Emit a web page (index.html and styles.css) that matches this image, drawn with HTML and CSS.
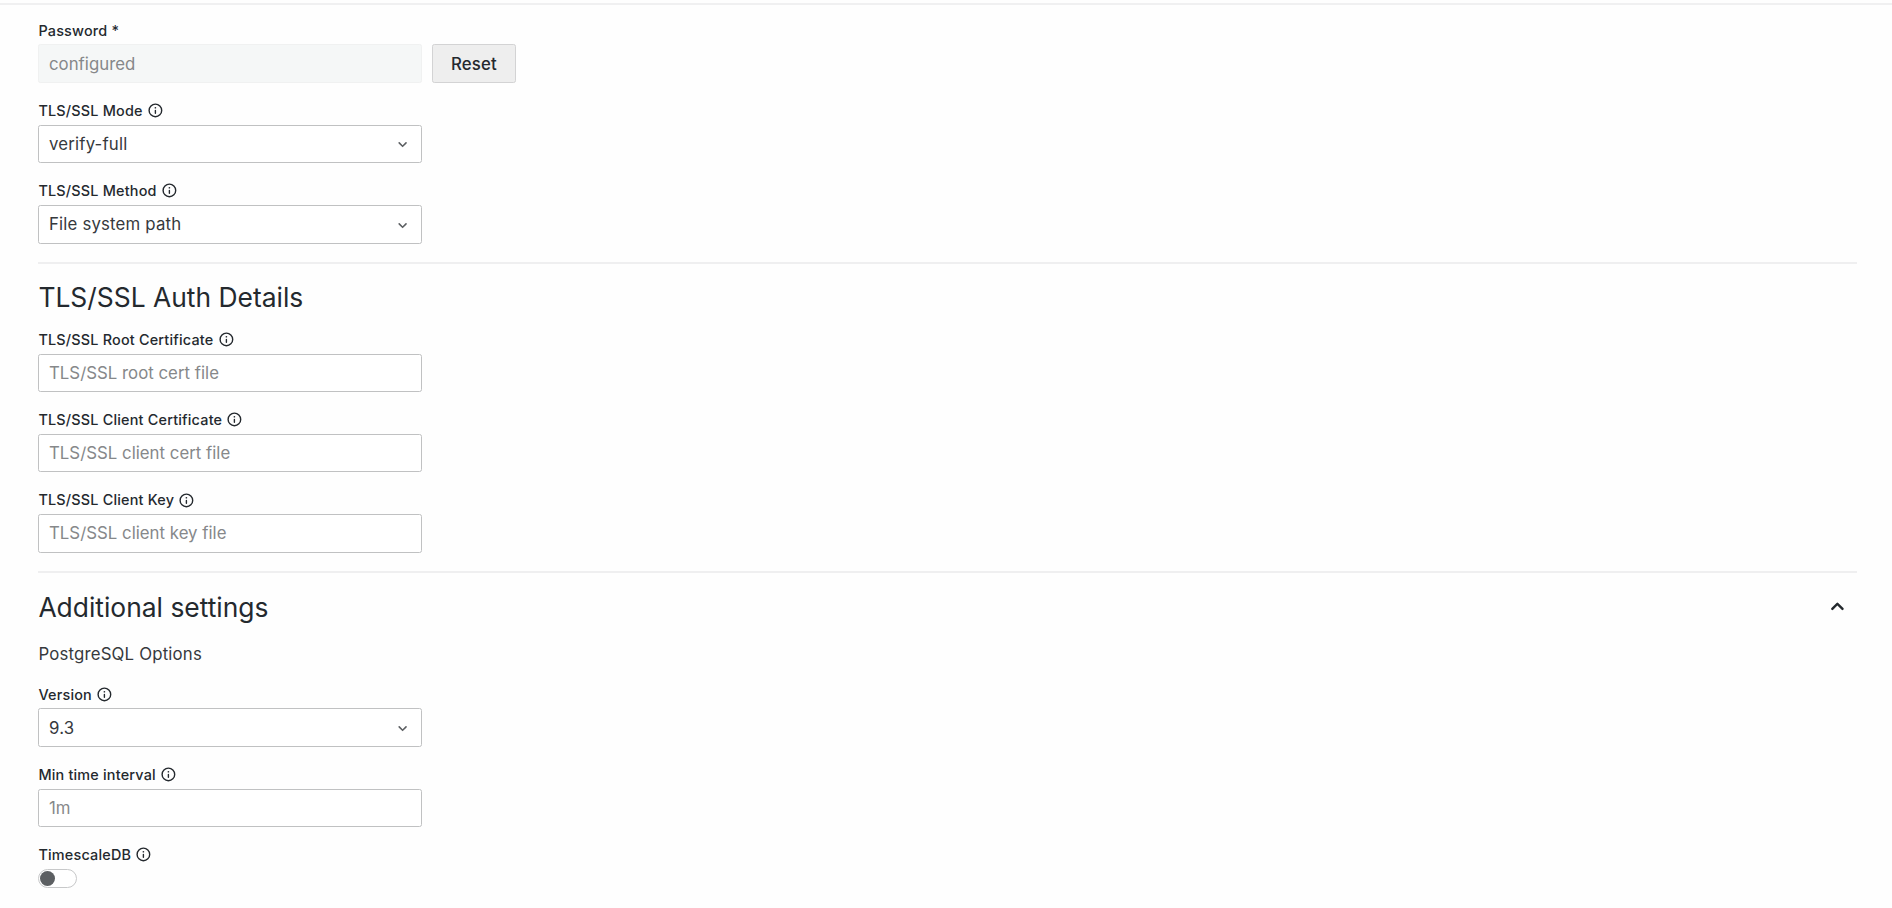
FILE: index.html
```html
<!DOCTYPE html>
<html lang="en">

<head>
    <meta charset="utf-8">
    <title>PostgreSQL data source</title>
    <link rel="stylesheet" href="styles.css">
</head>

<body>
    <!-- shared icons -->
    <svg class="sprite">
        <symbol id="info" viewBox="0 0 24 24">
            <path d="M12,2A10,10,0,1,0,22,12,10,10,0,0,0,12,2Zm0,18a8,8,0,1,1,8-8A8,8,0,0,1,12,20Zm0-9a1,1,0,0,0-1,1v4a1,1,0,0,0,2,0V12A1,1,0,0,0,12,11Zm0-4a1.2,1.2,0,1,0,1.2,1.2A1.2,1.2,0,0,0,12,7Z"/>
        </symbol>
        <symbol id="angle-down" viewBox="0 0 24 24">
            <path d="M17,9.17a1,1,0,0,0-1.41,0L12,12.71,8.46,9.17a1,1,0,0,0-1.41,0,1,1,0,0,0,0,1.42l4.24,4.24a1,1,0,0,0,1.42,0L17,10.59A1,1,0,0,0,17,9.17Z"/>
        </symbol>
        <symbol id="angle-up" viewBox="0 0 24 24">
            <path d="M17,13.41,12.71,9.17a1,1,0,0,0-1.42,0L7.05,13.41a1,1,0,0,0,0,1.42,1,1,0,0,0,1.41,0L12,11.29l3.54,3.54a1,1,0,0,0,.7.29,1,1,0,0,0,.71-.29A1,1,0,0,0,17,13.41Z"/>
        </symbol>
    </svg>

    <main class="page">
        <section class="section">
            <div class="field">
                <label class="label" for="password">Password *</label>
                <div class="row">
                    <input class="input" id="password" type="text" placeholder="configured" disabled>
                    <button class="button" type="button">Reset</button>
                </div>
            </div>
            <div class="field">
                <div class="label">TLS/SSL Mode <svg class="info"><use href="#info"/></svg></div>
                <div class="select">verify-full <svg class="arrow"><use href="#angle-down"/></svg></div>
            </div>
            <div class="field">
                <div class="label">TLS/SSL Method <svg class="info"><use href="#info"/></svg></div>
                <div class="select">File system path <svg class="arrow"><use href="#angle-down"/></svg></div>
            </div>
        </section>

        <section class="section auth">
            <h3 class="title">TLS/SSL Auth Details</h3>
            <div class="field">
                <label class="label" for="root-cert">TLS/SSL Root Certificate <svg class="info"><use href="#info"/></svg></label>
                <input class="input" id="root-cert" type="text" placeholder="TLS/SSL root cert file">
            </div>
            <div class="field">
                <label class="label" for="client-cert">TLS/SSL Client Certificate <svg class="info"><use href="#info"/></svg></label>
                <input class="input" id="client-cert" type="text" placeholder="TLS/SSL client cert file">
            </div>
            <div class="field">
                <label class="label" for="client-key">TLS/SSL Client Key <svg class="info"><use href="#info"/></svg></label>
                <input class="input" id="client-key" type="text" placeholder="TLS/SSL client key file">
            </div>
        </section>

        <section class="section additional">
            <div class="section-header">
                <h3 class="title">Additional settings</h3>
                <button class="collapse" type="button" aria-label="Collapse section">
                    <svg><use href="#angle-up"/></svg>
                </button>
            </div>
            <h6 class="subtitle">PostgreSQL Options</h6>
            <div class="field">
                <div class="label">Version <svg class="info"><use href="#info"/></svg></div>
                <div class="select">9.3 <svg class="arrow"><use href="#angle-down"/></svg></div>
            </div>
            <div class="field">
                <label class="label" for="interval">Min time interval <svg class="info"><use href="#info"/></svg></label>
                <input class="input" id="interval" type="text" placeholder="1m">
            </div>
            <div class="field">
                <div class="label">TimescaleDB <svg class="info"><use href="#info"/></svg></div>
                <div class="switch"><span class="knob"></span></div>
            </div>
        </section>
    </main>
</body>

</html>
```
FILE: styles.css
```css
* {
    box-sizing: border-box;
    margin: 0;
    padding: 0;
}

body {
    height: 908px;
    overflow: hidden;
    background-color: #fefefe;
    color: #24292e;
    font-family: Inter, sans-serif;
    font-size: 16.8px;
    letter-spacing: 0.18px;
}

svg {
    fill: currentColor;
    flex-shrink: 0;
}

.sprite {
    display: none;
}

.page {
    margin-top: 3px;
    border-top: 2px solid #f0f0f1;
    padding: 16.6px 35px 0 38.4px;
}

.section + .section {
    margin-top: -1px;
    border-top: 2px solid #efeff0;
}

.field {
    margin-bottom: 19.2px;
}

.label {
    display: flex;
    align-items: center;
    height: 17px;
    margin-bottom: 5.8px;
    font-size: 14.4px;
    font-weight: 500;
    letter-spacing: 0.2px;
}

.info {
    width: 16.8px;
    height: 16.8px;
    margin-left: 4.2px;
}

.row {
    display: flex;
    gap: 9.6px;
}

.input,
.select {
    display: flex;
    align-items: center;
    width: 384px;
    height: 38.4px;
    padding: 0 9.6px;
    border: 1px solid #c0c1c2;
    border-radius: 2.4px;
    background-color: #fff;
    color: #36393d;
    font: inherit;
    letter-spacing: inherit;
}

.input {
    letter-spacing: 0.02px;
}

.input::placeholder {
    color: #86888a;
}

.input:disabled {
    border-color: #f0f1f1;
    background-color: #f5f7f7;
}

.arrow {
    width: 19.2px;
    height: 19.2px;
    margin-top: 2px;
    margin-left: auto;
    color: #5c5f62;
}

.button {
    width: 84px;
    height: 38.4px;
    border: 1px solid #d3d3d4;
    border-radius: 2.4px;
    background-color: #eee;
    color: #24292e;
    font: inherit;
    font-weight: 500;
    letter-spacing: inherit;
}

.title {
    font-size: 26.4px;
    font-weight: 400;
    line-height: 32px;
    letter-spacing: 0;
}

.auth .title {
    padding-top: 17px;
    margin-bottom: 18px;
    box-sizing: content-box;
}

.section-header {
    display: flex;
    align-items: center;
    justify-content: space-between;
    height: 68px;
}

.collapse {
    width: 38.4px;
    height: 38.4px;
    border: 0 none;
    background-color: transparent;
    color: #24292e;
}

.collapse svg {
    display: block;
    width: 28.8px;
    height: 28.8px;
    margin: auto;
}

.subtitle {
    margin-top: 2px;
    margin-bottom: 20.8px;
    color: #36393d;
    font-size: 16.8px;
    font-weight: 400;
    line-height: 22px;
}

.switch {
    display: flex;
    align-items: center;
    width: 38.4px;
    height: 19.2px;
    padding-left: 1px;
    border: 1px solid #c7c8c9;
    border-radius: 10px;
    background-color: #fff;
}

.knob {
    width: 15px;
    height: 15px;
    border-radius: 50%;
    background-color: #5c5f62;
}
```
